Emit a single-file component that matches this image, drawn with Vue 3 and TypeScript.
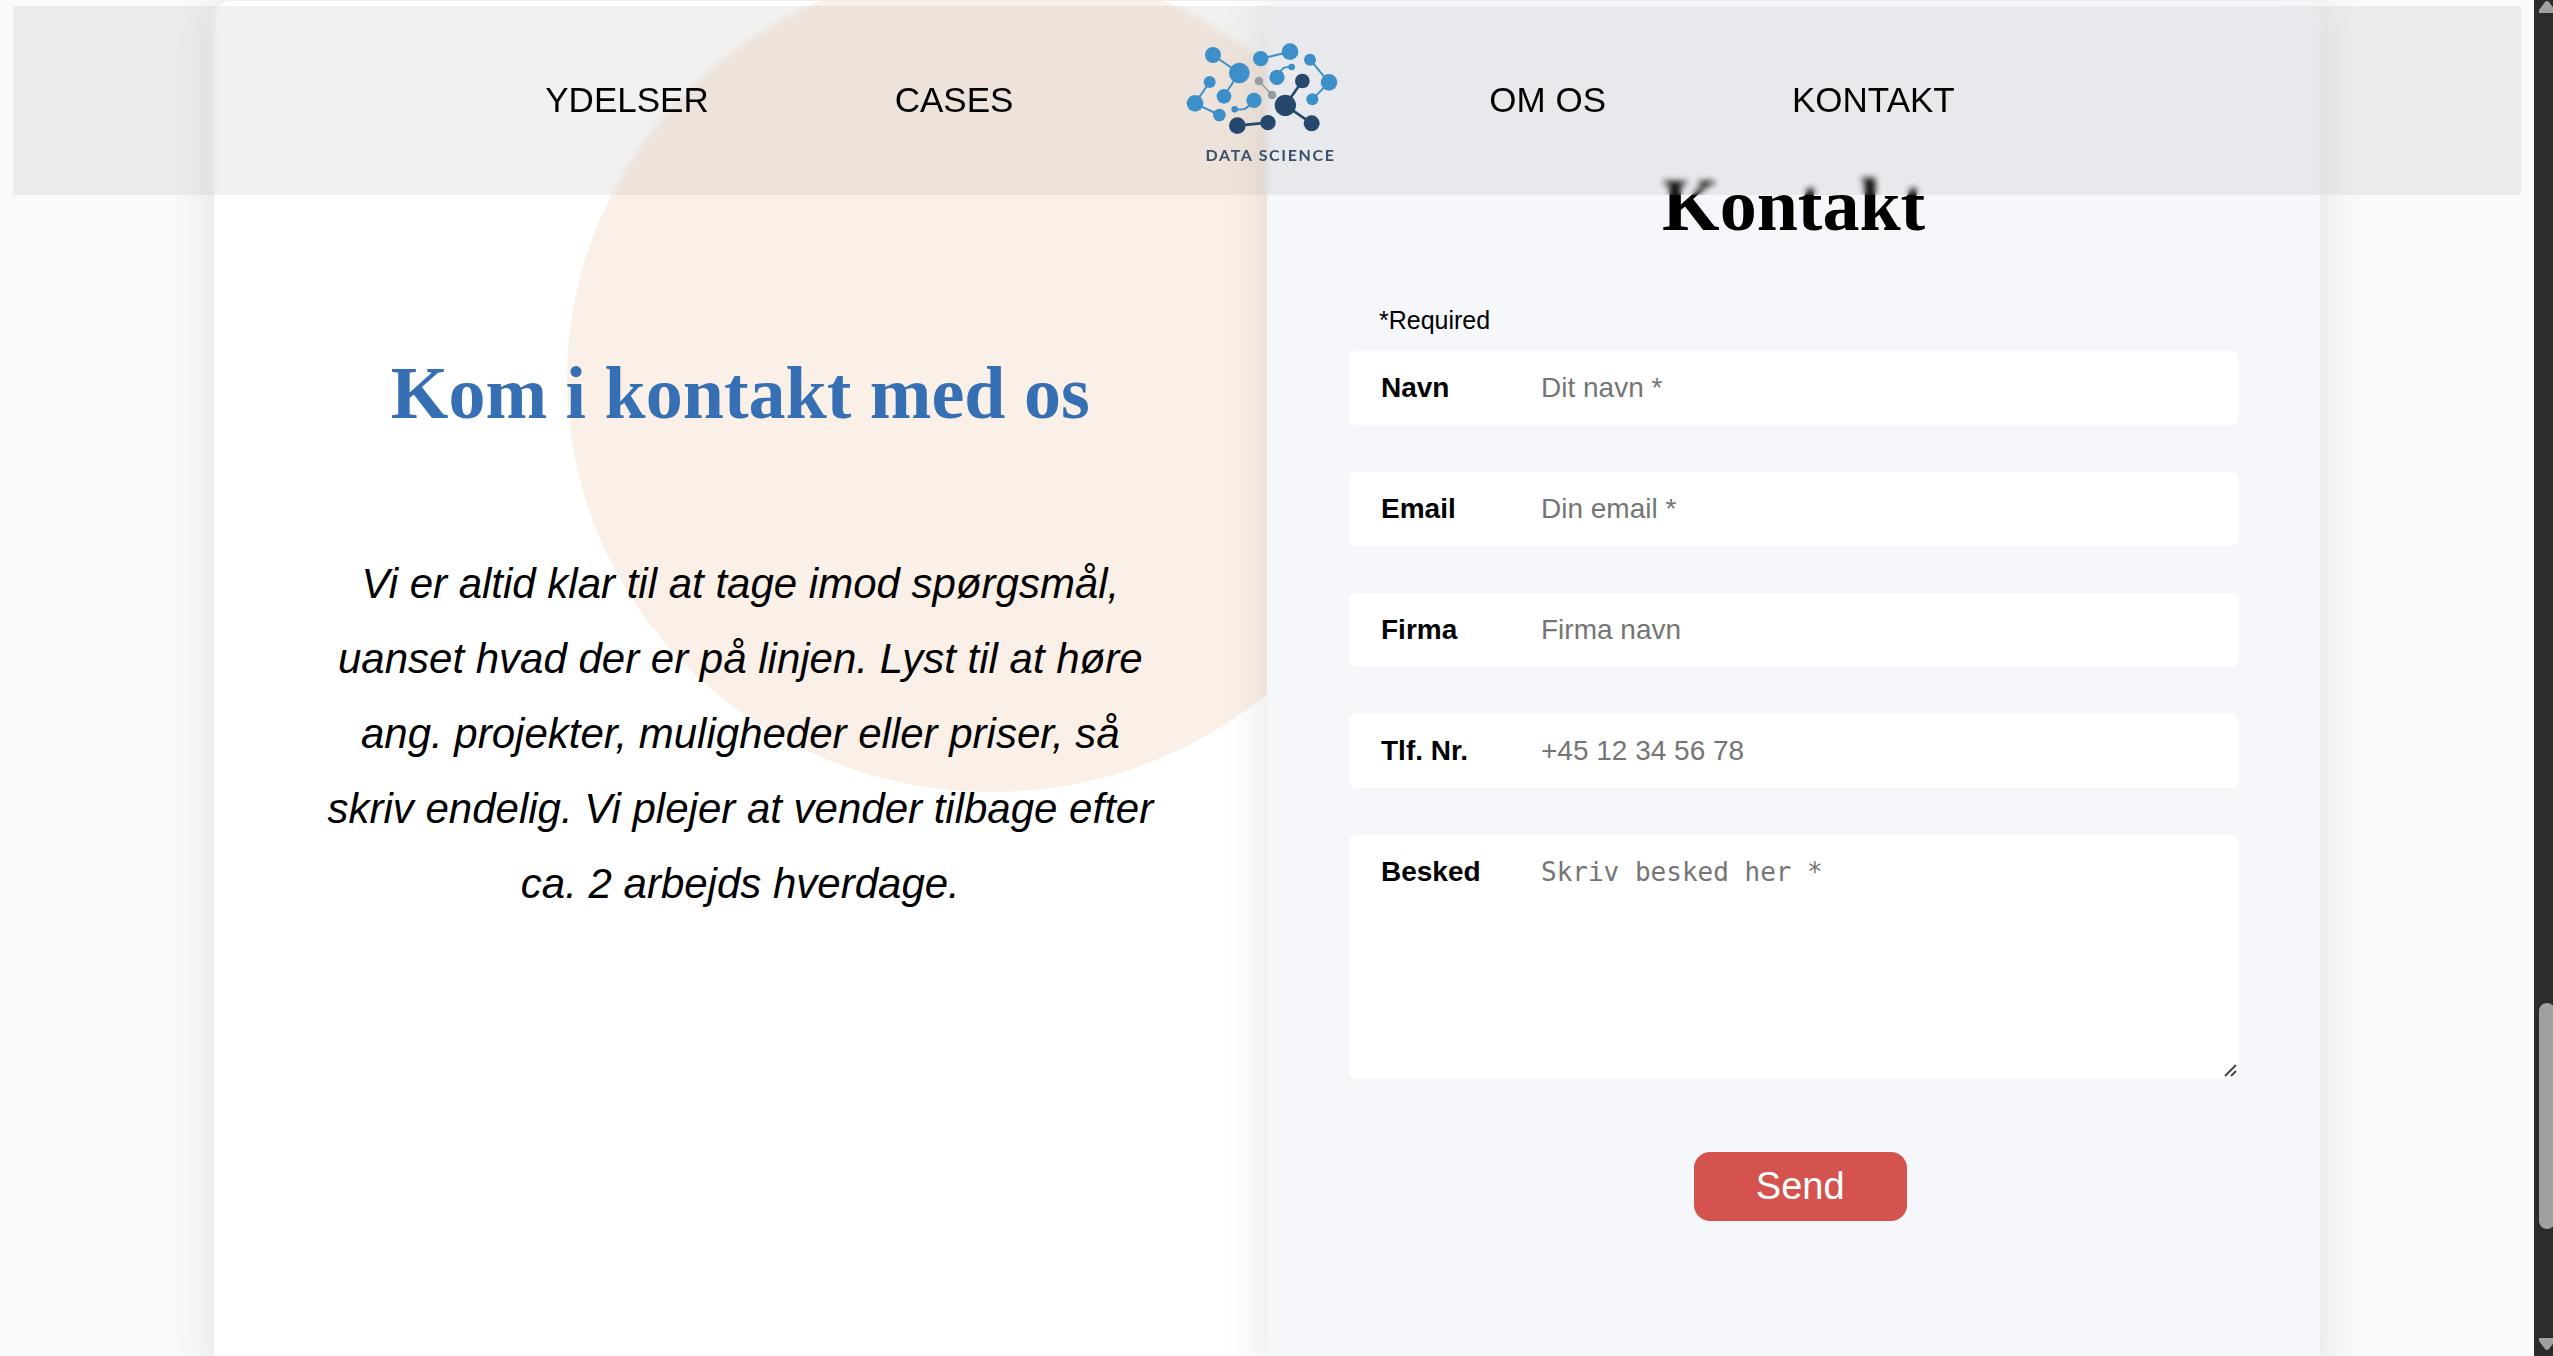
<script setup lang="ts">
import { reactive } from 'vue'

interface NavLink {
  label: string
  href: string
}

interface Field {
  id: 'name' | 'email' | 'company' | 'phone'
  label: string
  placeholder: string
  type: string
}

const leftLinks: NavLink[] = [
  { label: 'YDELSER', href: '#ydelser' },
  { label: 'CASES', href: '#cases' },
]
const rightLinks: NavLink[] = [
  { label: 'OM OS', href: '#om-os' },
  { label: 'KONTAKT', href: '#kontakt' },
]

const fields: Field[] = [
  { id: 'name', label: 'Navn', placeholder: 'Dit navn *', type: 'text' },
  { id: 'email', label: 'Email', placeholder: 'Din email *', type: 'email' },
  { id: 'company', label: 'Firma', placeholder: 'Firma navn', type: 'text' },
  { id: 'phone', label: 'Tlf. Nr.', placeholder: '+45 12 34 56 78', type: 'tel' },
]

const form = reactive({ name: '', email: '', company: '', phone: '', message: '' })
</script>

<template>
  <div class="window">
    <div class="page">
      <header class="nav">
        <nav class="links">
          <a v-for="l in leftLinks" :key="l.href" :href="l.href">{{ l.label }}</a>
        </nav>
        <svg class="logo" viewBox="-48 0 582 420" role="img" aria-label="Data Science">
          <g fill="none" stroke="#3d8fc9" stroke-width="6">
            <path d="M129 75 207 129 162 199" />
            <path d="M119 156 75 220 148 255" />
            <path d="M272 86 360 65" />
            <path d="M420 89 477 157 427 208" />
            <path d="M321 142C340 108 340 112 365 111" />
            <path d="M194 238C230 240 226 238 252 211" />
          </g>
          <g fill="#3d8fc9">
            <circle cx="129" cy="75" r="24" />
            <circle cx="208" cy="129" r="31" />
            <circle cx="162" cy="199" r="22" />
            <circle cx="119" cy="156" r="18" />
            <circle cx="75" cy="220" r="25" />
            <circle cx="148" cy="255" r="19" />
            <circle cx="272" cy="86" r="23" />
            <circle cx="360" cy="65" r="25" />
            <circle cx="420" cy="89" r="18" />
            <circle cx="477" cy="157" r="25" />
            <circle cx="427" cy="208" r="18" />
            <circle cx="321" cy="142" r="23" />
            <circle cx="365" cy="111" r="10" />
            <circle cx="194" cy="238" r="10" />
            <circle cx="252" cy="211" r="23" />
          </g>
          <path d="M267 153 306 195" stroke="#979d9d" stroke-width="5" />
          <g fill="#979d9d">
            <circle cx="267" cy="153" r="13" />
            <circle cx="306" cy="195" r="13" />
          </g>
          <path d="M397 153 346 226 425 280M202 287 294 278" fill="none" stroke="#26486c" stroke-width="8" />
          <g fill="#26486c">
            <circle cx="397" cy="153" r="22" />
            <circle cx="346" cy="226" r="32" />
            <circle cx="425" cy="280" r="24" />
            <circle cx="202" cy="287" r="25" />
            <circle cx="294" cy="278" r="23" />
          </g>
          <text class="logo-text" x="302" y="392" text-anchor="middle">DATA SCIENCE</text>
        </svg>
        <nav class="links">
          <a v-for="l in rightLinks" :key="l.href" :href="l.href">{{ l.label }}</a>
        </nav>
      </header>

      <main class="card">
        <section class="pane intro">
          <h2>Kom i kontakt med os</h2>
          <p>
            Vi er altid klar til at tage imod spørgsmål, uanset hvad der er på linjen. Lyst til at
            høre ang. projekter, muligheder eller priser, så skriv endelig. Vi plejer at vender
            tilbage efter ca. 2 arbejds hverdage.
          </p>
        </section>

        <section class="pane contact">
          <h2>Kontakt</h2>
          <form @submit.prevent>
            <p class="required">*Required</p>
            <div class="fields">
              <div v-for="f in fields" :key="f.id" class="field">
                <label :for="f.id">{{ f.label }}</label>
                <input :id="f.id" v-model="form[f.id]" :type="f.type" :placeholder="f.placeholder" />
              </div>
              <div class="field">
                <label for="message">Besked</label>
                <textarea id="message" v-model="form.message" placeholder="Skriv besked her *"></textarea>
                <svg class="grip" viewBox="0 0 14 14" aria-hidden="true">
                  <path d="M1 12 12 1M7 12 12 7" />
                </svg>
              </div>
            </div>
            <button type="submit">Send</button>
          </form>
        </section>
      </main>
    </div>

    <div class="scrollbar" aria-hidden="true">
      <svg class="arrow" viewBox="0 0 16 12"><path d="M0 12V9L6 1Q8-1 10 1L16 9V12Z" /></svg>
      <div class="track"><div class="thumb"></div></div>
      <svg class="arrow" viewBox="0 0 16 12"><path d="M0 0V3L6 11Q8 13 10 11L16 3V0Z" /></svg>
    </div>
  </div>
</template>

<style>
body {
  background: #f8fafc;
}
</style>

<style scoped>
* {
  box-sizing: border-box;
}

.window {
  display: flex;
  height: 100vh;
  overflow: hidden;
  background: #f8fafc;
  color: #000;
  font-family: 'Liberation Sans', Arial, sans-serif;
}

.page {
  position: relative;
  flex: 1;
  min-width: 0;
  padding: 1px 13px 0;
}

.nav {
  position: absolute;
  z-index: 2;
  top: 6px;
  left: 13px;
  right: 13px;
  display: flex;
  align-items: center;
  justify-content: center;
  gap: 141px;
  padding: 24px 34px 25px 0;
  background: rgba(128, 128, 128, 0.11);
  backdrop-filter: blur(3px);
}

.links {
  display: flex;
  gap: 186px;
}

.links a {
  color: #000;
  font-size: 35px;
  line-height: 40px;
  text-decoration: none;
  white-space: nowrap;
}

.logo {
  flex: none;
  width: 194px;
  height: 140px;
}

.logo-text {
  fill: #38506a;
  font-family: Lato, sans-serif;
  font-size: 48px;
  font-weight: 700;
  letter-spacing: 5px;
}

.card {
  display: grid;
  grid-template-columns: 1fr 1fr;
  width: 84%;
  margin: 0 auto;
}

.pane {
  min-width: 0;
  box-shadow: 0 0 50px rgba(0, 0, 0, 0.11);
}

h2 {
  margin: 0;
  font-family: 'Liberation Serif', 'Times New Roman', serif;
  font-size: 74px;
  font-weight: 700;
  line-height: 84px;
  text-align: center;
}

.intro {
  position: relative;
  overflow: hidden;
  padding-top: 350px;
  border-radius: 16px 0 0 16px;
  background: #fff;
}

.intro::before {
  content: '';
  position: absolute;
  top: -35px;
  left: 353px;
  width: 850px;
  height: 826px;
  border-radius: 50%;
  background: #fbf0e7;
}

.intro h2 {
  position: relative;
  color: #366fb3;
}

.intro p {
  position: relative;
  width: 80%;
  margin: 111px auto 0;
  font-size: 42px;
  font-style: italic;
  line-height: 75px;
  text-align: center;
}

.contact {
  position: relative;
  padding: 162px 82px 164px;
  border-radius: 0 16px 16px 0;
  background: #f5f7fb;
}

.required {
  margin: 58px 0 16px 30px;
  font-size: 25px;
  line-height: 30px;
}

.fields {
  display: flex;
  flex-direction: column;
  gap: 47px;
}

.field {
  position: relative;
  display: flex;
  overflow: hidden;
  border-radius: 6px;
  background: #fff;
}

.field label {
  flex: none;
  width: 192px;
  padding-left: 32px;
  font-size: 28px;
  font-weight: 700;
  line-height: 74px;
}

.field input,
.field textarea {
  flex: 1;
  min-width: 0;
  margin: 0;
  padding: 0;
  border: 0;
  outline: 0;
  background: transparent;
  color: #000;
  font-family: inherit;
  font-size: 28px;
}

.field textarea {
  height: 243px;
  padding-top: 20px;
  font-family: 'DejaVu Sans Mono', monospace;
  font-size: 26px;
  line-height: 34px;
  resize: vertical;
}

.field textarea::-webkit-resizer {
  background: transparent;
}

.grip {
  position: absolute;
  right: 0;
  bottom: 0;
  width: 14px;
  height: 14px;
  fill: none;
  stroke: #444;
  stroke-width: 2;
  pointer-events: none;
}

.field ::placeholder {
  color: #757575;
}

button {
  display: block;
  width: 213px;
  height: 69px;
  margin: 74px 0 0 calc(50% - 100px);
  padding: 0;
  border: 0;
  border-radius: 16px;
  background: #d5534f;
  color: #fff;
  font-family: inherit;
  font-size: 38px;
  cursor: pointer;
}

.scrollbar {
  display: flex;
  flex: none;
  flex-direction: column;
  width: 19px;
  padding: 1px 0 6px 5px;
  overflow: hidden;
  background: #2c2c2c;
}

.arrow {
  flex: none;
  width: 16px;
  height: 12px;
  fill: #a0a0a0;
}

.track {
  flex: 1;
  padding-top: 990px;
}

.thumb {
  width: 16px;
  height: 226px;
  border-radius: 8px;
  background: #a0a0a0;
}
</style>
